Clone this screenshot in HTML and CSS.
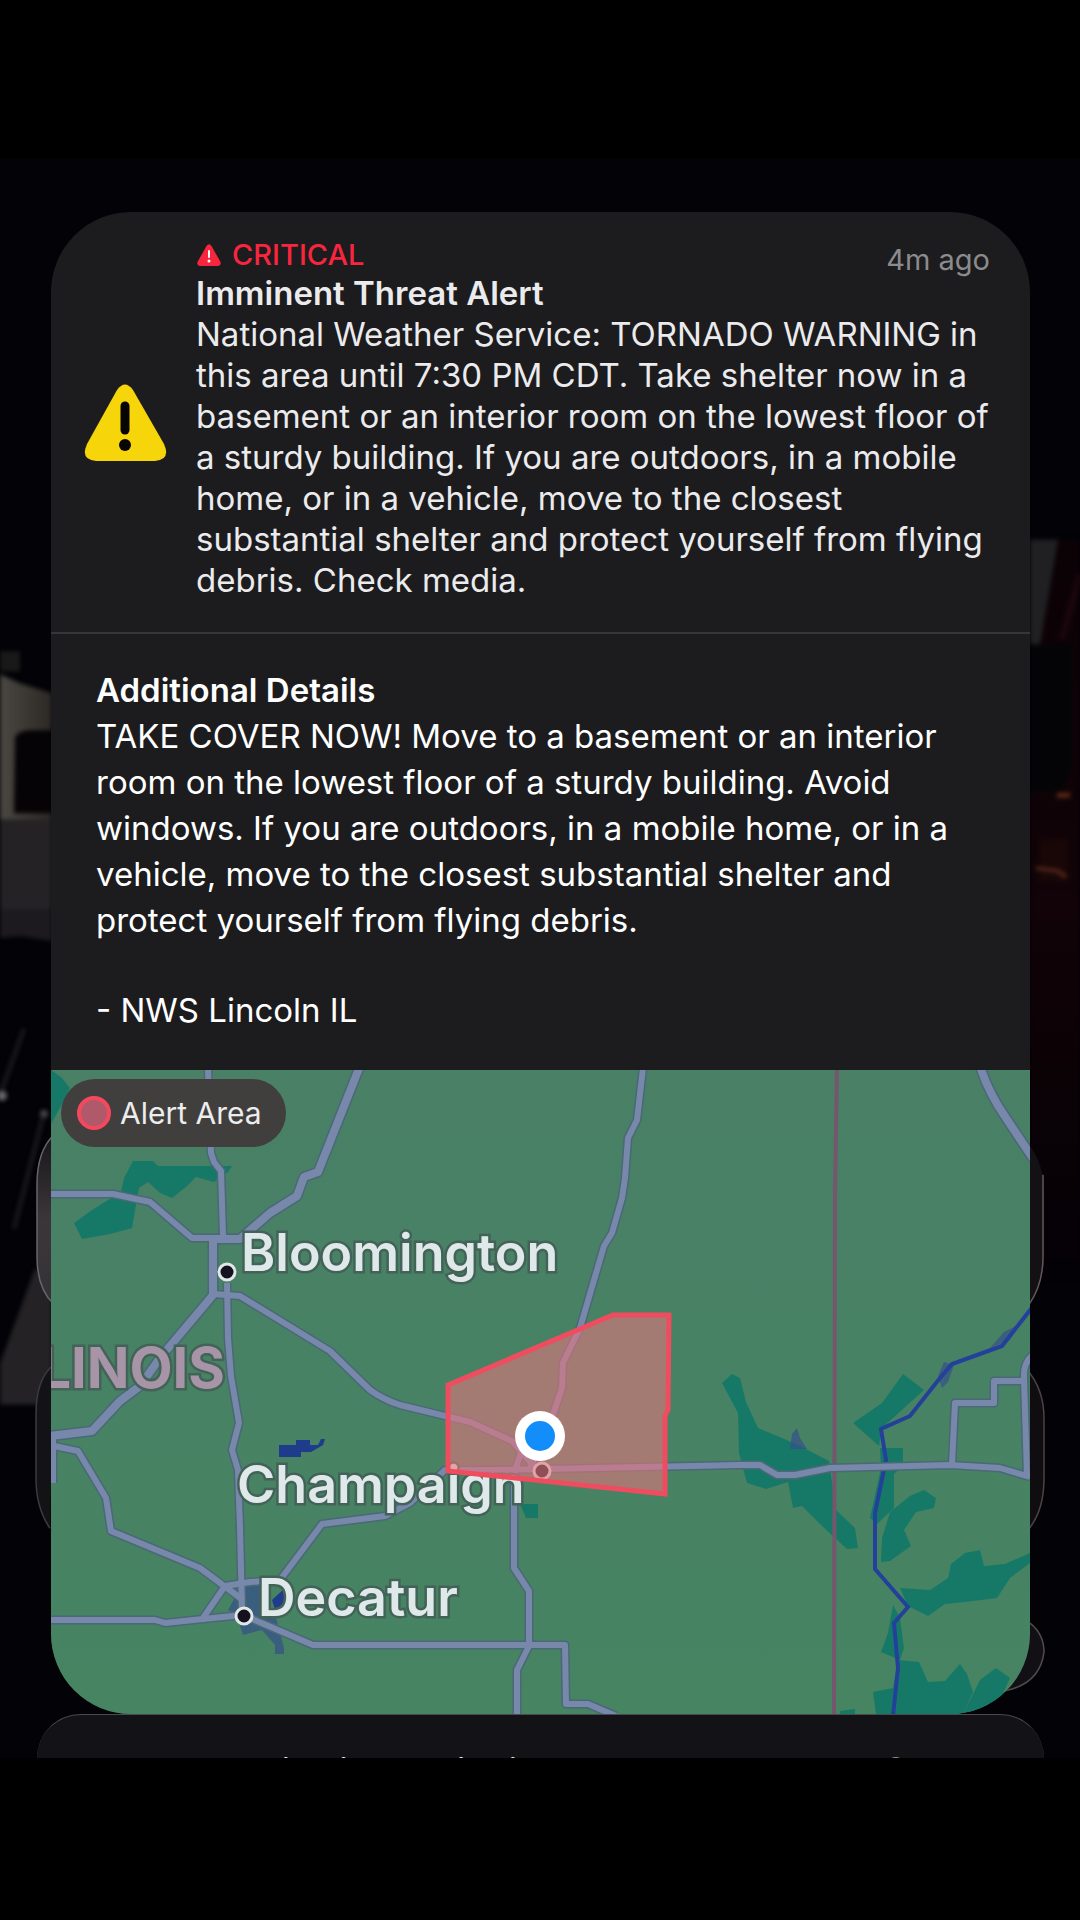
FILE: index.html
```html
<!DOCTYPE html>
<html lang="en">
<head>
  <meta charset="UTF-8">
  <meta name="viewport" content="width=device-width, initial-scale=1.0">
  <title>Imminent Threat Alert</title>
  <link rel="stylesheet" href="styles.css">
</head>
<body>

  <main class="screen">

    <!-- dimmed photo and older notifications behind the alert -->
    <svg class="wallpaper" viewBox="0 158 1080 1602" preserveAspectRatio="none" aria-hidden="true">
      <defs>
        <filter id="soft" x="-20%" y="-20%" width="140%" height="140%" color-interpolation-filters="sRGB"><feGaussianBlur stdDeviation="2"/></filter>
        <linearGradient id="wall" x1="0" y1="0" x2="1" y2="0">
          <stop offset="0" stop-color="#4a4843"/>
          <stop offset="1" stop-color="#2c2824"/>
        </linearGradient>
        <linearGradient id="dusk" x1="0" y1="0" x2="0" y2="1">
          <stop offset="0" stop-color="#0b0206"/>
          <stop offset="0.5" stop-color="#110307"/>
          <stop offset="1" stop-color="#040106"/>
        </linearGradient>
        <linearGradient id="glass" x1="0" y1="0" x2="0" y2="1">
          <stop offset="0" stop-color="#17161a"/>
          <stop offset="0.5" stop-color="#3b363a"/>
          <stop offset="1" stop-color="#343236"/>
        </linearGradient>
      </defs>
      <g filter="url(#soft)">
        <path d="M0 652H20V672H0z" fill="#1a191a"/>
        <path d="M0 675L20 684L52 694V822H0z" fill="url(#wall)"/>
        <path d="M15 738Q18 732 28 731H52V814H14z" fill="#060306"/>
        <path d="M0 820H52V942L20 937L0 939z" fill="#252225"/>
        <path d="M0 910H52V942L20 937L0 939z" fill="#1c1a1e"/>
        <path d="M0 1096L24 1030M14 1230L44 1114" stroke="#1c1b20" stroke-width="4"/>
        <circle cx="2" cy="1097" r="5" fill="#67646a"/>
        <circle cx="44" cy="1115" r="4" fill="#46444a"/>
        <path d="M0 1365L35 1270L52 1280V1406H0z" fill="#242224"/>
        <path d="M1030 540H1080V1280H1030z" fill="url(#dusk)"/>
        <path d="M1030 540H1058L1040 645H1030z" fill="#202022"/>
        <path d="M1080 575L1062 640" stroke="#1c060c" stroke-width="6"/>
        <path d="M1030 645H1072V770L1062 792H1030z" fill="#040407"/>
        <path d="M1040 840H1068V882H1040z" fill="#190707"/>
        <path d="M1057 796H1070" stroke="#5b2714" stroke-width="5"/>
        <path d="M1036 869L1058 872L1066 878" stroke="#522419" stroke-width="4" fill="none"/>
      </g>
      <path d="M54 1136Q37 1152 37 1186V1258Q37 1290 54 1306" fill="url(#glass)" stroke="#68646a" stroke-width="1.5"/>
      <path d="M1024 1140Q1043 1160 1044 1190V1258Q1044 1290 1024 1312z" fill="#131113"/>
      <path d="M1043 1176V1258Q1043 1286 1029 1306" fill="none" stroke="#63555a" stroke-width="1.5"/>
      <path d="M54 1366Q36 1380 36 1416V1480Q36 1510 50 1530" fill="#131215" stroke="#3d3b40" stroke-width="1.5"/>
      <path d="M1026 1370Q1044 1390 1044 1420V1480Q1044 1515 1026 1534" fill="#100d10" stroke="#4d4246" stroke-width="1.5"/>
      <path d="M1030 1625Q1044 1636 1044 1654Q1040 1686 1004 1693" fill="#121014" stroke="#514b4e" stroke-width="1.5"/>
    </svg>

    <article class="alert">
      <header class="alert-header">
        <svg class="alert-icon" viewBox="0 -7 83 84" aria-hidden="true">
          <path d="M33 6Q41 -5 49 6L80 60Q87 76 71 77H12Q-4 76 3 60z" fill="#f7d50b"/>
          <path d="M41 22V46" stroke="#080604" stroke-width="9" stroke-linecap="round"/>
          <circle cx="41" cy="61" r="6" fill="#080604"/>
        </svg>
        <div class="alert-body">
          <p class="alert-level">
            <svg class="level-icon" viewBox="0 0 24 22" aria-hidden="true">
              <path d="M9.500 2Q12 -1.500 14.500 2L23.500 18Q24.500 21.500 21 22H3Q-0.500 21.500 0.500 18z" fill="#f8253f"/>
              <path d="M12 7V13" stroke="#fff" stroke-width="2" stroke-linecap="round"/>
              <circle cx="12" cy="17" r="1.500" fill="#fff"/>
            </svg>
            CRITICAL
          </p>
          <h1 class="alert-title">Imminent Threat Alert</h1>
          <p class="alert-text">National Weather Service: TORNADO WARNING in this area until 7:30 PM CDT. Take shelter now in a basement or an interior room on the lowest floor of a sturdy building. If you are outdoors, in a mobile home, or in a vehicle, move to the closest substantial shelter and protect yourself from flying debris. Check media.</p>
        </div>
        <time class="alert-time">4m ago</time>
      </header>

      <section class="details">
        <h2 class="details-title">Additional Details</h2>
        <p>TAKE COVER NOW! Move to a basement or an interior room on the lowest floor of a sturdy building. Avoid windows. If you are outdoors, in a mobile home, or in a vehicle, move to the closest substantial shelter and protect yourself from flying debris.</p>
        <p class="details-source">- NWS Lincoln IL</p>
      </section>

      <div class="map">
        <svg class="map-canvas" viewBox="51 1072 979 644" role="img" aria-label="Map of the alert area around Champaign">
          <defs>
            <linearGradient id="land" x1="0" y1="0" x2="0" y2="1">
              <stop offset="0" stop-color="#498066"/>
              <stop offset="1" stop-color="#468462"/>
            </linearGradient>
            <g id="roads">
              <path d="M208 1068L209 1110L211 1155L214 1164L221 1173L223 1238"/>
              <path d="M50 1196H113L150 1204L192 1240H240"/>
              <path d="M213 1296L240 1298L330 1353L370 1392Q384 1402 400 1407L470 1424L512 1443L532 1466"/>
              <path d="M227 1285L228 1340L231 1378L239 1425L232 1452L238 1472L240 1530L242 1612"/>
              <path d="M53 1438V1485"/>
              <path d="M54 1448L78 1453L106 1500L111 1533L200 1570L243 1602"/>
              <path d="M50 1622H155L165 1625L203 1621L243 1617L313 1647H565L566 1706H588L616 1718"/>
              <path d="M203 1620L225 1588L250 1584L280 1582L322 1526L385 1518L410 1505L445 1472H500L740 1467H760L777 1477H795L830 1470L950 1467L1000 1470L1030 1479"/>
              <path d="M643 1070L637 1122L628 1140L625 1180L622 1200L612 1235L604 1248L580 1330L563 1365L562 1390L545 1440L530 1470"/>
              <path d="M524 1446L514 1475V1570L529 1593V1648L517 1672V1718"/>
              <path d="M952 1466L955 1405H994V1383H1024"/>
              <path d="M1027 1478L1024 1380Q1023 1364 1034 1356"/>
            </g>
            <g id="highways">
              <path d="M360 1068L318 1174L304 1179L297 1198L270 1215L240 1241H213V1297L160 1360L140 1388L120 1403L92 1433L50 1438"/>
              <path d="M980 1068Q988 1094 1006 1120L1034 1162"/>
            </g>
          </defs>

          <rect x="51" y="1072" width="979" height="644" fill="url(#land)"/>

          <g class="forest">
            <path d="M51 1072L62 1080L70 1090L62 1106L51 1126z"/>
            <path d="M133 1163H153L158 1168H232L228 1174L214 1184L196 1179L186 1189L172 1200L160 1195L148 1184L139 1190L132 1230L110 1236L82 1241L74 1225L92 1212L121 1194L124 1180z"/>
            <path d="M722 1385L732 1376L740 1380L746 1404L758 1430L782 1440L800 1448L829 1463L836 1512L855 1530L858 1550L847 1551L822 1528L802 1508L793 1510L788 1484L766 1491L747 1485L739 1455L738 1415z"/>
            <path d="M903 1376L924 1392L882 1430L879 1448L853 1425L882 1405z"/>
            <path d="M880 1450H903V1468L894 1476V1510L877 1526L870 1520L881 1470z"/>
            <path d="M890 1514L910 1498L924 1492L936 1500L934 1510L916 1514L904 1532L911 1548L890 1563L881 1564L882 1540z"/>
            <path d="M900 1590L930 1592L948 1580L951 1566L965 1555L980 1552L984 1568L1005 1566L1030 1555V1565L1010 1580L997 1600L965 1604L945 1606L928 1618L908 1608z"/>
            <path d="M893 1607L900 1620L904 1650L900 1662L881 1654L888 1635z"/>
            <path d="M898 1662L919 1664L928 1684L945 1683L960 1666L967 1676L973 1694L963 1716H876L873 1694L893 1690z"/>
            <path d="M964 1714L980 1682L996 1670L1010 1680L1000 1702L974 1714z"/>
            <path d="M840 1713L855 1711V1716H840z"/>
            <path d="M520 1506H538V1520H526z"/>
          </g>

          <path class="border" d="M837 1068L835 1200L834 1718"/>

          <g class="water">
            <path d="M279 1447H296V1442H310V1447H318L321 1441H325L323 1447L311 1454H301V1459H279z"/>
            <path d="M272 1602L285 1590V1606L275 1612z"/>
          </g>
          <g class="city">
            <path d="M243 1585L262 1586V1610L276 1620L284 1650V1656H275V1647L262 1632L243 1637L236 1616L228 1612z"/>
            <path d="M792 1436L797 1430L800 1440L807 1451H790z"/>
            <path d="M938 1378L944 1364L954 1367L948 1384L942 1390z"/>
            <path d="M990 1350L1004 1334L1016 1328L1010 1342z"/>
          </g>
          <path class="river" d="M1034 1307L1002 1348L952 1366L940 1380L910 1418L881 1431L886 1462L875 1515V1571L908 1609L894 1625L898 1670L893 1718"/>

          <use href="#highways" class="highway-edge"/>
          <use href="#roads" class="road-edge"/>
          <use href="#highways" class="highway"/>
          <use href="#roads" class="road"/>

          <text class="state" x="225" y="1390" text-anchor="end">ILLINOIS</text>

          <circle class="town" cx="227" cy="1274" r="8"/>
          <circle class="town" cx="244" cy="1618" r="8"/>
          <circle class="town" cx="542" cy="1473" r="8"/>
          <text class="town-name" x="241" y="1273">Bloomington</text>
          <text class="town-name" x="237" y="1505">Champaign</text>
          <text class="town-name" x="258" y="1618">Decatur</text>

          <path class="zone" d="M448 1387L613 1317H669L668 1412L665 1418V1496L448 1473z"/>
          <circle cx="540" cy="1438" r="25" fill="#fff"/>
          <circle cx="540" cy="1438" r="15" fill="#138dfa"/>
        </svg>
        <div class="legend"><span class="legend-dot"></span>Alert Area</div>
      </div>
    </article>

    <article class="next">
      <span class="next-title">Warning in the district</span>
      <time class="next-time">9m ago</time>
    </article>

  </main>

</body>
</html>
```
FILE: styles.css
```css
body {
  margin: 0;
  padding: 158px 0;
  background-color: #000;
  color: #fff;
  font-family: Inter, "Liberation Sans", sans-serif;
}

h1,
h2,
p {
  margin: 0;
}

.screen {
  position: relative;
  padding: 54px 50px 0 51px;
  background-color: #020207;
  overflow: hidden;
}

.wallpaper {
  position: absolute;
  top: 0;
  left: 0;
  width: 100%;
  height: 100%;
}

.alert {
  position: relative;
  border-radius: 80px;
  background-color: #1c1c1e;
  overflow: hidden;
}

.alert-header {
  position: relative;
  display: flex;
  align-items: center;
  gap: 29px;
  padding: 25px 33px 31px;
  border-bottom: 2px solid #363638;
}

.alert-icon {
  flex: none;
  width: 83px;
  height: 84px;
}

.alert-body {
  color: #ebebed;
  font-size: 33px;
  line-height: 41px;
}

.alert-level {
  display: flex;
  align-items: center;
  gap: 10px;
  color: #f8253f;
  font-size: 29px;
  font-weight: 500;
  line-height: 36px;
}

.level-icon {
  width: 26px;
  height: 22px;
}

.alert-title,
.details-title {
  font-size: inherit;
  font-weight: 600;
}

.alert-time {
  position: absolute;
  top: 30px;
  right: 40px;
  color: #8b8b8d;
  font-size: 29px;
  line-height: 36px;
}

.details {
  padding: 33px 45px 37px;
  font-size: 33px;
  line-height: 46px;
}

.details-source {
  margin-top: 44px;
}

.map {
  position: relative;
}

.map-canvas {
  display: block;
  width: 100%;
}

.forest {
  fill: #167968;
}

.border {
  fill: none;
  stroke: #75566d;
  stroke-width: 4;
}

.water {
  fill: #1f3b8b;
}

.city {
  fill: #35508a;
  fill-opacity: 0.7;
}

.river {
  fill: none;
  stroke: #23419a;
  stroke-width: 4;
}

.road,
.road-edge,
.highway,
.highway-edge {
  fill: none;
  stroke: #7888aa;
  stroke-width: 6;
  stroke-linejoin: round;
}

.road-edge {
  stroke: #4a6878;
  stroke-width: 9;
}

.highway {
  stroke-width: 8;
}

.highway-edge {
  stroke: #4a6878;
  stroke-width: 11;
}

.town {
  fill: #14121f;
  stroke: #e2e6e6;
  stroke-width: 3;
}

.town-name,
.state {
  font-size: 52px;
  font-weight: 600;
  fill: #dfe9ea;
  stroke: #436258;
  stroke-width: 5;
  paint-order: stroke;
}

.state {
  fill: #a794a6;
  font-size: 56px;
  font-weight: 700;
}

.zone {
  fill: #e2767d;
  fill-opacity: 0.6;
  stroke: #f04c60;
  stroke-width: 5;
}

.legend {
  position: absolute;
  top: 9px;
  left: 10px;
  display: flex;
  align-items: center;
  gap: 9px;
  padding: 0 24px 0 16px;
  border-radius: 34px;
  background-color: #403f3e;
  color: #ededed;
  font-size: 30px;
  line-height: 68px;
}

.legend-dot {
  box-sizing: border-box;
  width: 34px;
  height: 34px;
  border: 4px solid #f5485f;
  border-radius: 50%;
  background-color: #b0596a;
}

.next {
  position: relative;
  display: flex;
  justify-content: space-between;
  box-sizing: border-box;
  height: 44px;
  margin: 0 -14px;
  padding: 35px 54px 0 160px;
  border-top: 1px solid #4b4a4e;
  border-radius: 66px 66px 0 0;
  background-color: #131216;
  color: #ebebed;
  font-size: 33px;
  line-height: 41px;
  overflow: hidden;
}

.next-title {
  font-weight: 600;
}

.next-time {
  color: #8b8b8d;
  font-size: 29px;
  line-height: 36px;
}
```
